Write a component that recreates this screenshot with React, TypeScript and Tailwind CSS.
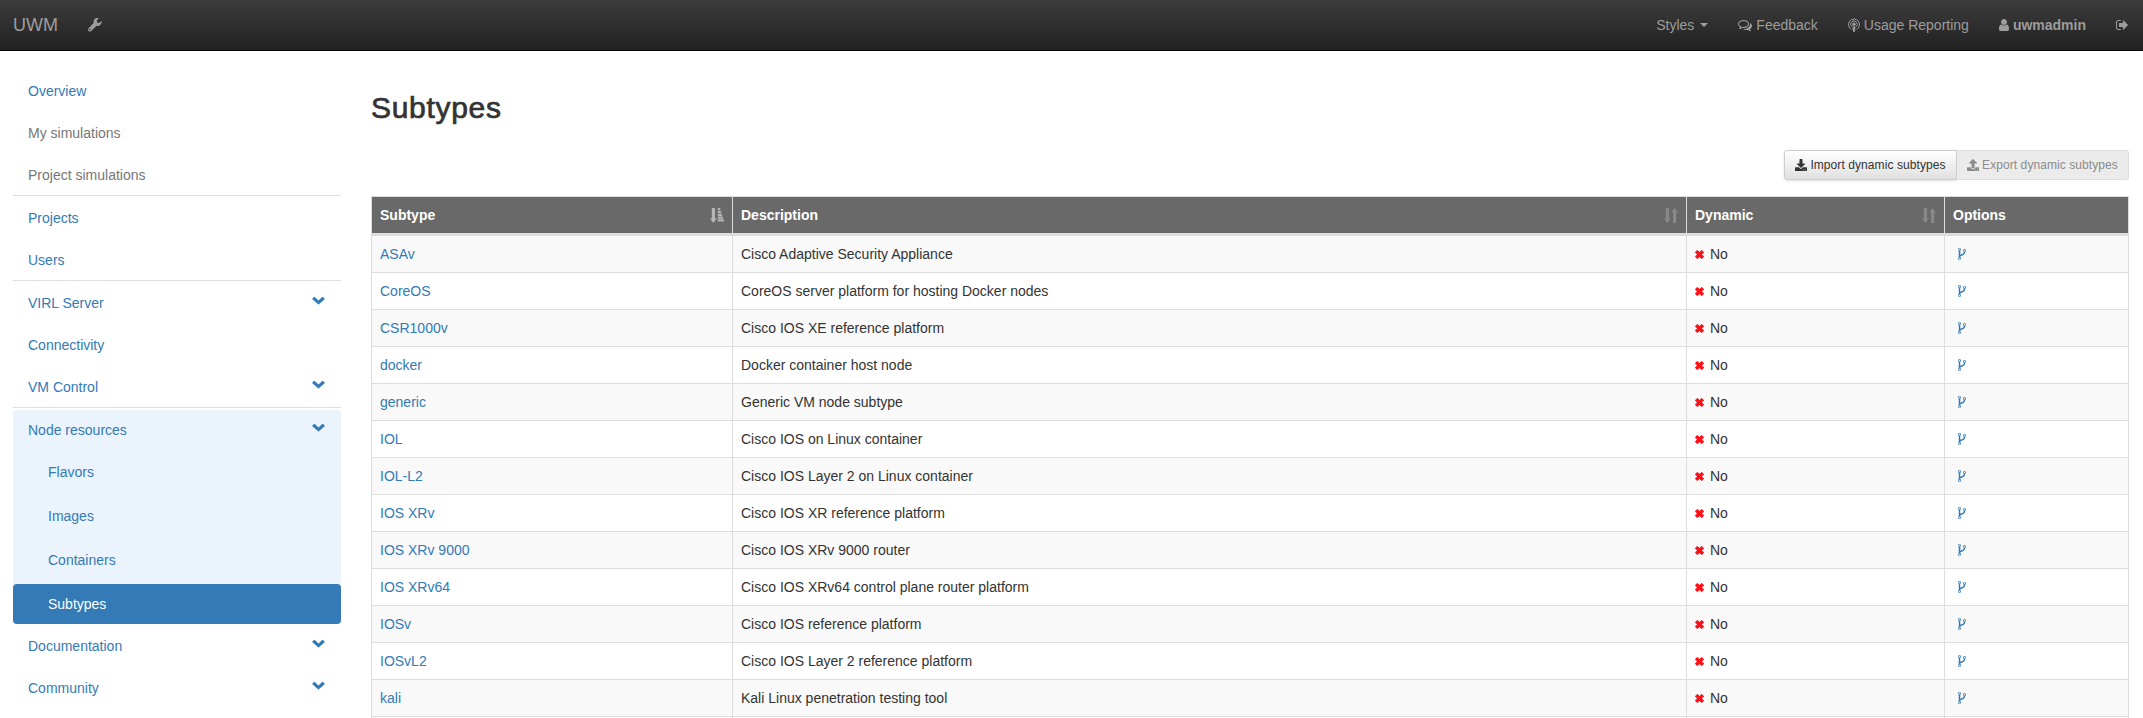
import type { ReactNode } from "react";
import { FaDownload, FaUpload } from "react-icons/fa";

const FORK =
  "M672 1472q0-40-28-68t-68-28-68 28-28 68 28 68 68 28 68-28 28-68zm0-1152q0-40-28-68t-68-28-68 28-28 68 28 68 68 28 68-28 28-68zm640 128q0-40-28-68t-68-28-68 28-28 68 28 68 68 28 68-28 28-68zm96 0q0 52-26 96.5t-70 69.5q-2 287-226 414-67 38-203 81-128 40-169.5 71t-41.5 100v26q44 25 70 69.5t26 96.5q0 80-56 136t-136 56-136-56-56-136q0-52 26-96.5t70-69.5v-820q-44-25-70-69.5t-26-96.5q0-80 56-136t136-56 136 56 56 136q0 52-26 96.5t-70 69.5v497q54-26 154-57 55-17 87.5-29.5t70.5-31 59-39.5 40.5-51 28-69.5 8.5-91.5q-44-25-70-69.5t-26-96.5q0-80 56-136t136-56 136 56 56 136z";

const COMMENTS =
  "M704 384q-153 0-286 52t-211.500 141-78.500 191q0 82 53 158t149 132l97 56-35 84q34-20 62-39l44-31 53 10q78 14 153 14 153 0 286-52t211.500-141 78.500-191-78.500-191-211.500-141-286-52zm0-128q191 0 353.500 68.500t256.500 186.500 94 257-94 257-256.500 186.500-353.500 68.500q-86 0-176-16-124 88-278 128-36 9-86 16h-3q-11 0-20.500-8t-11.500-21q-1-3-1-6.500t.5-6.500 2-6l2.500-5 3.500-5.500 4-5 4.500-5 4-4.500q5-6 23-25t26-29.500 22.500-29 25-38.500 20.500-44q-124-72-195-177t-71-224q0-139 94-257t256.500-186.500 353.500-68.500zm822 1169q10 24 20.500 44t25 38.500 22.500 29 26 29.500 23 25q1 1 4 4.500t4.500 5 4 5 3.500 5.500l2.500 5 2 6 .5 6.500-1 6.500q-3 14-13 22t-22 7q-50-7-86-16-154-40-278-128-90 16-176 16-271 0-472-132 58 4 88 4 161 0 309-45t264-129q125-92 192-212t67-254q0-77-23-152 129 71 204 178t75 230q0 120-71 224.500t-195 176.500z";

const USER =
  "M1536 1399q0 109-62.500 187t-150.500 78h-854q-88 0-150.500-78t-62.500-187q0-85 8.500-160.500t31.500-152 58.500-131 94-89 134.500-34.500q131 128 313 128t313-128q76 0 134.500 34.500t94 89 58.500 131 31.500 152 8.500 160.500zm-256-887q0 159-112.500 271.500t-271.500 112.500-271.500-112.500-112.500-271.500 112.500-271.500 271.500-112.500 271.500 112.500 112.500 271.500z";

const SIGN_OUT =
  "M704 1440q0 4 1 20t.5 26.500-3 23.500-10 19.500-20.500 6.500h-320q-119 0-203.500-84.500t-84.500-203.500v-704q0-119 84.500-203.500t203.500-84.500h320q13 0 22.500 9.500t9.500 22.500q0 4 1 20t.5 26.500-3 23.500-10 19.500-20.500 6.500h-320q-66 0-113 47t-47 113v704q0 66 47 113t113 47h312l11.500 1 11.500 3 8 5.500 7 9 2 13.500zm928-544q0 26-19 45l-544 544q-19 19-45 19t-45-19-19-45v-288h-448q-26 0-45-19t-19-45v-384q0-26 19-45t45-19h448v-288q0-26 19-45t45-19 45 19l544 544q19 19 19 45z";

function Glyph({ d, className, viewBox = "0 0 1792 1792" }: { d: string; className: string; viewBox?: string }) {
  return (
    <svg viewBox={viewBox} className={`shrink-0 ${className}`} fill="currentColor">
      <path d={d} />
    </svg>
  );
}

function Wrench() {
  return (
    <svg viewBox="0 0 14 14" className="h-3.5 w-3.5" fill="currentColor">
      <path d="M13.600 3.100 11.300 5.100 9.200 4.500 8.700 2.500 10.800.4C9.300-.2 7.600 0 6.500 1.200 5.500 2.200 5.300 3.600 5.800 4.800L.6 10.200c-.8.800-.8 2 0 2.700.8.800 1.900.8 2.700 0L8.500 7.700c1.300.4 2.700.2 3.700-.8C13.300 5.800 14.100 4.600 13.600 3.100zM2 12.300a.8.8 0 1 1 0-1.600.8.8 0 0 1 0 1.600z" />
    </svg>
  );
}

function Chevron() {
  return (
    <svg viewBox="0 0 13 9" className="-mt-[5px] h-[9px] w-[13px]" fill="currentColor">
      <path d="M.4 2.500 2 .9q.4-.4.8 0l3.700 3.700L10.200.9q.4-.4.8 0l1.600 1.600q.4.400 0 .8L6.900 8.300q-.4.400-.8 0L.4 3.300q-.4-.4 0-.8z" />
    </svg>
  );
}

function Podcast() {
  return (
    <svg viewBox="0 0 12 14" className="h-3.5 w-3" fill="none" stroke="currentColor">
      <path d="M3.400 11.400A5.500 5.500 0 1 1 8.600 11.400M3.700 8.700A3.300 3.300 0 1 1 8.300 8.700" strokeWidth="1" />
      <circle cx="6" cy="6.200" r="1.700" fill="currentColor" stroke="none" />
      <path d="M4.500 8.500h3l-.5 4.700q-.1.800-1 .8t-1-.8z" fill="currentColor" stroke="none" />
    </svg>
  );
}

function SortBoth() {
  return (
    <svg viewBox="0 0 14 15" className="h-[15px] w-3.5 text-[#888888]" fill="currentColor">
      <path d="M1.800 0h3.200v10.500H6.900L3.400 15 0 10.500h1.800zM9 15h3.200V4.500H14L10.600 0 7.100 4.500H9z" />
    </svg>
  );
}

function SortAsc() {
  return (
    <svg viewBox="0 0 14 15" className="h-[15px] w-3.5 text-[#b4b4b4]" fill="currentColor">
      <path d="M1.800 0h3.200v10.500H6.900L3.400 15 0 10.500h1.800zM7.800 0h2.500v2.200H7.800zM7.800 2.900h3.400v2.200H7.800zM7.800 5.700H12v2.200H7.800zM7.800 8.500H13v2.200H7.800zM7.800 11.300H14v2.300H7.800z" />
    </svg>
  );
}

function Cross() {
  return (
    <svg viewBox="0 0 10 10" className="mt-px mr-1.5 h-[9px] w-[9px] text-[#fb1218]" fill="currentColor">
      <path d="M.2 2.200 2.200.2q.4-.3.800 0L5 2.300 7 .2q.4-.3.800 0l2 2q.3.400 0 .8L7.700 5l2.100 2q.3.400 0 .8l-2 2q-.4.300-.8 0L5 7.700 3 9.800q-.4.300-.8 0l-2-2q-.3-.4 0-.8L2.300 5 .2 3q-.3-.4 0-.8z" />
    </svg>
  );
}

type NavProps = { label: string; muted?: boolean; expandable?: boolean; nested?: boolean; className?: string };

function NavItem({ label, muted, expandable, nested, className = "" }: NavProps) {
  return (
    <a
      className={`flex h-10 items-center justify-between pr-4 ${nested ? "pl-[35px]" : "pl-[15px]"} ${
        muted ? "text-[#777777]" : "text-[#337ab7]"
      } ${className}`}
    >
      <span>{label}</span>
      {expandable && <Chevron />}
    </a>
  );
}

function Divider() {
  return <div className="mb-0.5 h-px bg-[#e0e0e0]" />;
}

const rows: [string, string][] = [
  ["ASAv", "Cisco Adaptive Security Appliance"],
  ["CoreOS", "CoreOS server platform for hosting Docker nodes"],
  ["CSR1000v", "Cisco IOS XE reference platform"],
  ["docker", "Docker container host node"],
  ["generic", "Generic VM node subtype"],
  ["IOL", "Cisco IOS on Linux container"],
  ["IOL-L2", "Cisco IOS Layer 2 on Linux container"],
  ["IOS XRv", "Cisco IOS XR reference platform"],
  ["IOS XRv 9000", "Cisco IOS XRv 9000 router"],
  ["IOS XRv64", "Cisco IOS XRv64 control plane router platform"],
  ["IOSv", "Cisco IOS reference platform"],
  ["IOSvL2", "Cisco IOS Layer 2 reference platform"],
  ["kali", "Kali Linux penetration testing tool"],
];

function HeadCell({ label, icon }: { label: string; icon?: ReactNode }) {
  return (
    <div className="flex items-center justify-between bg-[#696969] px-2 font-bold text-white">
      <span>{label}</span>
      {icon}
    </div>
  );
}

const GRID = "grid grid-cols-[360px_953px_257px_183px] gap-x-px border-x border-[#dddddd] bg-[#dddddd]";

export default function App() {
  return (
    <div className="h-[718px] overflow-hidden bg-white font-['Liberation_Sans',Arial,sans-serif] text-[14px] leading-5 text-[#333333]">
      <header className="flex h-[51px] items-center justify-between border-b border-[#080808] bg-linear-to-b from-[#3c3c3c] to-[#222222] pr-[15px] pl-[13px] text-[#9d9d9d]">
        <div className="flex items-center">
          <span className="w-[75px] text-[18px]">UWM</span>
          <Wrench />
        </div>
        <nav className="flex items-center gap-[30px]">
          <a className="flex items-center">
            Styles
            <svg viewBox="0 0 8 4" className="ml-1.5 h-1 w-2" fill="currentColor">
              <path d="M0 0h8L4 4z" />
            </svg>
          </a>
          <a className="flex items-center gap-1">
            <Glyph d={COMMENTS} className="h-3.5 w-3.5" />
            Feedback
          </a>
          <a className="flex items-center gap-1">
            <Podcast />
            Usage Reporting
          </a>
          <a className="flex items-center gap-1 font-bold">
            <Glyph d={USER} viewBox="256 0 1280 1792" className="h-3.5 w-2.5" />
            uwmadmin
          </a>
          <Glyph d={SIGN_OUT} viewBox="64 0 1568 1792" className="h-3.5 w-3" />
        </nav>
      </header>

      <div className="flex pl-[13px]">
        <aside className="w-[328px] shrink-0 pt-5">
          <NavItem label="Overview" />
          <NavItem label="My simulations" muted className="mt-0.5" />
          <NavItem label="Project simulations" muted className="mt-0.5" />
          <Divider />
          <NavItem label="Projects" />
          <NavItem label="Users" className="mt-0.5" />
          <Divider />
          <NavItem label="VIRL Server" expandable />
          <NavItem label="Connectivity" className="mt-0.5" />
          <NavItem label="VM Control" expandable className="mt-0.5" />
          <Divider />
          <div className="rounded bg-[#ebf4fc]">
            <NavItem label="Node resources" expandable />
            <NavItem label="Flavors" nested className="mt-0.5" />
            <NavItem label="Images" nested className="mt-1" />
            <NavItem label="Containers" nested className="mt-1" />
            <a className="mt-1 flex h-10 items-center rounded bg-[#337ab7] pl-[35px] text-white">Subtypes</a>
          </div>
          <NavItem label="Documentation" expandable className="mt-0.5" />
          <NavItem label="Community" expandable className="mt-0.5" />
        </aside>

        <main className="ml-[30px] w-[1758px]">
          <h1 className="mt-10 text-[30px] leading-[33px] font-medium tracking-[0.7px] [-webkit-text-stroke:0.7px_#333333]">
            Subtypes
          </h1>
          <div className="mt-[26px] flex h-[30px] justify-end text-[12px] leading-[18px] tracking-[0.08px]">
            <button className="flex w-[173px] items-center justify-center gap-[3px] rounded-l-[3px] border border-[#cccccc] bg-linear-to-b from-white to-[#e0e0e0] shadow-sm">
              <FaDownload className="h-3 w-3" />
              Import dynamic subtypes
            </button>
            <button className="flex w-[172px] items-center justify-center gap-[3px] rounded-r-[3px] border border-l-0 border-[#dedede] bg-[#ebebeb] text-[#8c8c8c]">
              <FaUpload className="h-3 w-3" />
              Export dynamic subtypes
            </button>
          </div>

          <div className="mt-4">
            <div className={`${GRID} h-10 border-t border-b-[3px]`}>
              <HeadCell label="Subtype" icon={<SortAsc />} />
              <HeadCell label="Description" icon={<SortBoth />} />
              <HeadCell label="Dynamic" icon={<SortBoth />} />
              <HeadCell label="Options" />
            </div>
            {rows.map(([name, description], i) => {
              const cell = `flex items-center px-2 ${i % 2 === 0 ? "bg-[#f9f9f9]" : "bg-white"}`;
              return (
                <div key={name} className={`${GRID} h-[37px] border-b`}>
                  <div className={`${cell} text-[#337ab7]`}>{name}</div>
                  <div className={cell}>{description}</div>
                  <div className={cell}>
                    <Cross />
                    No
                  </div>
                  <div className={`${cell} text-[#337ab7]`}>
                    <Glyph d={FORK} className="ml-0.5 h-3.5 w-3.5" />
                  </div>
                </div>
              );
            })}
            <div className={`${GRID} h-2`}>
              <div className="bg-white" />
              <div className="bg-white" />
              <div className="bg-white" />
              <div className="bg-white" />
            </div>
          </div>
        </main>
      </div>
    </div>
  );
}
